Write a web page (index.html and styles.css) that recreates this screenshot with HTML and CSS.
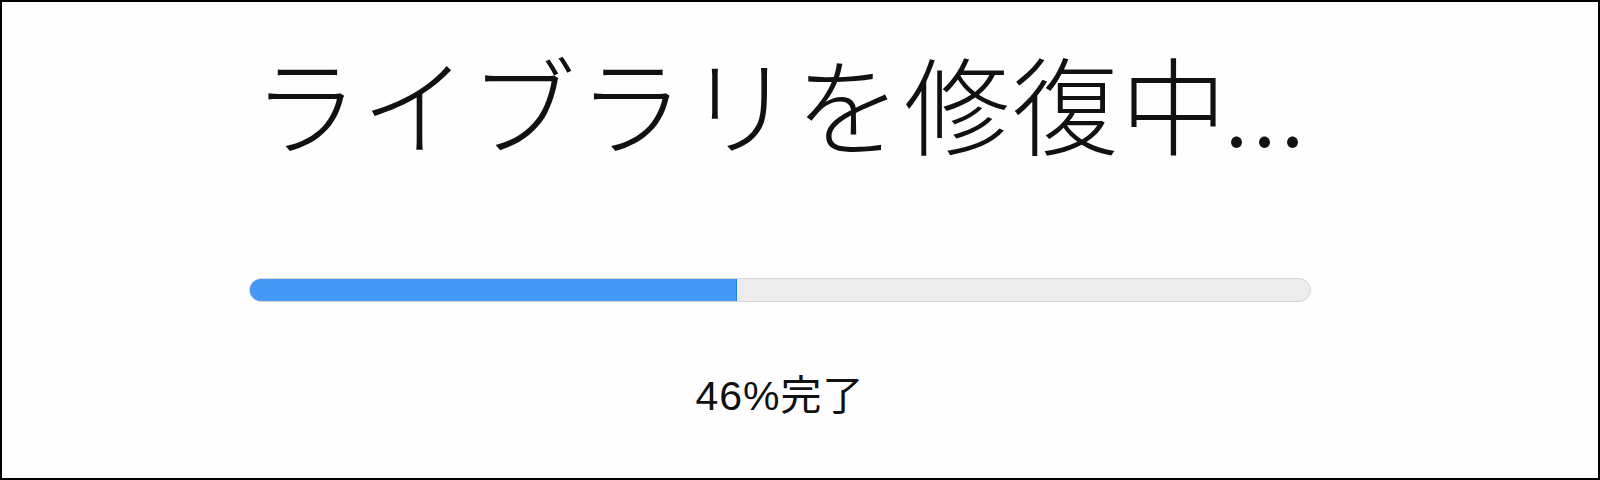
FILE: index.html
```html
<!DOCTYPE html>
<html lang="ja">
<head>
<meta charset="utf-8">
<link rel="stylesheet" href="styles.css">
</head>
<body>
<div class="frame">
  <h1 class="title">ライブラリを修復中<span class="dots">...</span></h1>
  <div class="track"><div class="fill" style="width: 46%"></div></div>
  <p class="status">46%完了</p>
</div>
</body>
</html>
```
FILE: styles.css
```css
html, body {
  margin: 0;
  padding: 0;
  background: #fff;
}
.frame {
  width: 1600px;
  height: 480px;
  box-sizing: border-box;
  border: 2px solid #000;
  padding: 0 40px 0 0;
  display: flex;
  flex-direction: column;
  align-items: center;
  background: #fefefe;
}
.title {
  margin: 34px 0 0 0;
  font-family: "Noto Sans CJK JP", sans-serif;
  font-weight: 300;
  font-size: 106px;
  line-height: 130px;
  letter-spacing: 2.5px;
  color: #111;
  white-space: nowrap;
}
.dots {
  letter-spacing: 1.5px;
  margin-left: -6px;
}
.track {
  margin-top: 112px;
  width: 1062px;
  height: 24px;
  box-sizing: border-box;
  border: 1px solid #d6d6d6;
  border-radius: 12px;
  background: #ececec;
  overflow: hidden;
  display: flex;
}
.fill {
  box-sizing: border-box;
  background: #4599f6;
  border: 1px solid #1e82f0;
  border-radius: 12px 0 0 12px;
  margin: -1px 0 0 -1px;
  height: 24px;
}
.status {
  margin: 70px 0 0 0;
  font-family: "Liberation Sans", "Noto Sans CJK JP", sans-serif;
  font-size: 41px;
  line-height: 48px;
  letter-spacing: 1px;
  color: #111;
}
```
